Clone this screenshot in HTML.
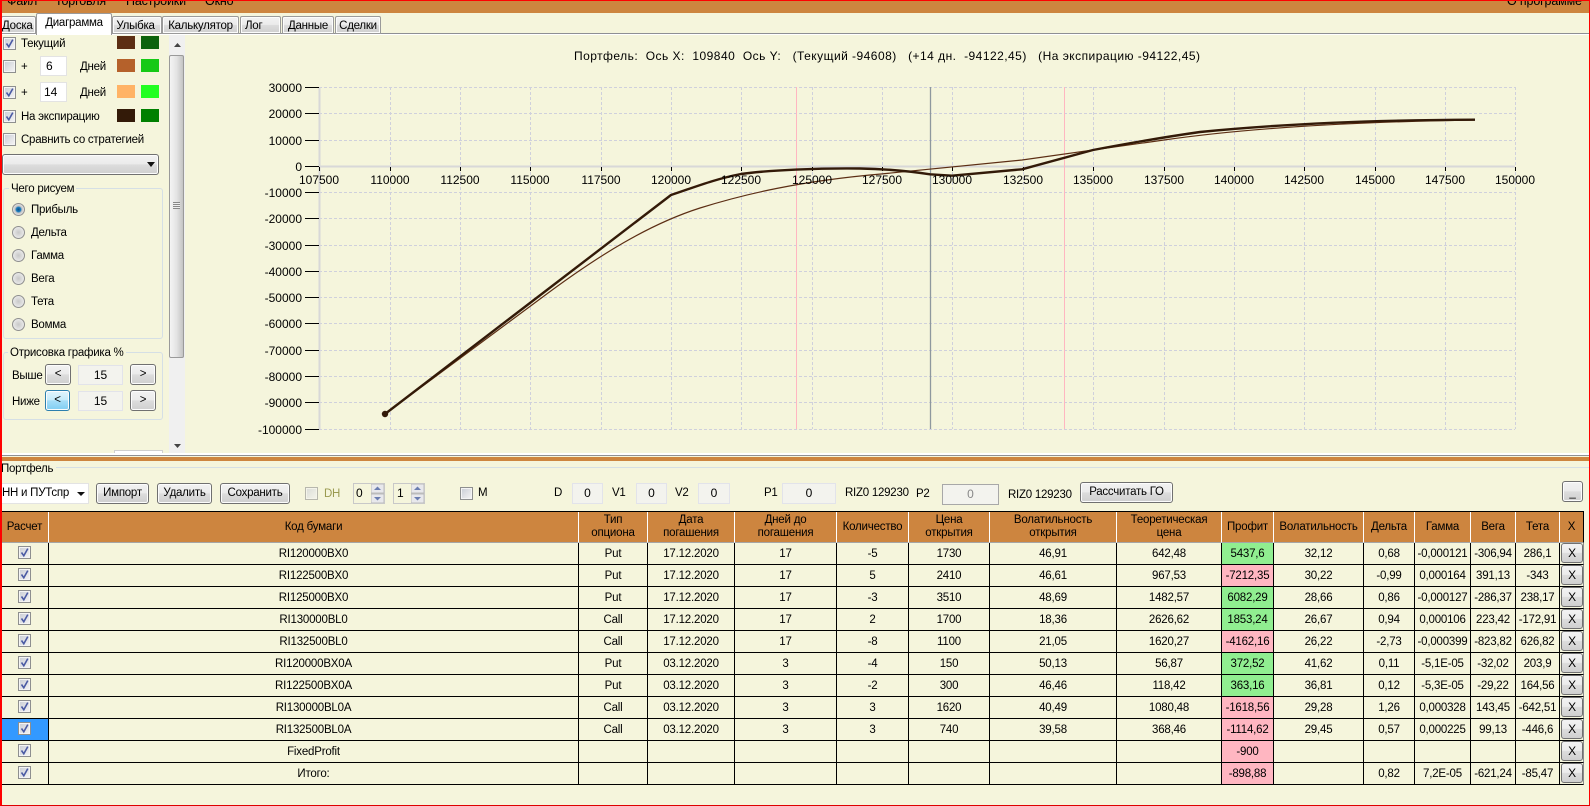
<!DOCTYPE html>
<html lang="ru"><head><meta charset="utf-8"><title>Диаграмма</title>
<style>
html,body{margin:0;padding:0;width:1590px;height:806px;overflow:hidden;background:#F5F5DC}
body{position:relative;font:11.5px/14px "Liberation Sans",Arial,sans-serif;color:#000}
.a,.t,.b,.f,.g,.s{position:absolute;box-sizing:border-box}
.t{white-space:pre;letter-spacing:-.25px}
.t[style*="left:21px"],.t[style*="left:31px"],.t[style*="left:80px"],.t[style*="left:12px"]{margin-top:1px}
.b{border:1px solid #707070;border-radius:3px;background:linear-gradient(#f2f2f2 0,#ebebeb 48%,#dddddd 50%,#cfcfcf 100%);text-align:center;box-shadow:inset 0 0 0 1px #fcfcfc;letter-spacing:-.25px;white-space:pre}
.f{background:#f3f3ee;border:1px solid #e2e3ea;text-align:center;font-size:12px}
.g{border:1px solid #d5dfe5;border-radius:3px}
.lg{position:absolute;background:#F5F5DC;padding:0 2px;letter-spacing:-.25px;white-space:pre}
.r{position:absolute;left:12px;width:13px;height:13px;border-radius:50%;border:1px solid #8f8f8f;background:radial-gradient(circle at 50% 50%,#c8c8c8,#e8e8e8 70%,#f4f4f4);box-sizing:border-box}
svg.c{position:absolute;width:13px;height:13px;display:block}
table{position:absolute;left:1px;top:511px;border-collapse:separate;border-spacing:0;table-layout:fixed;width:1583px;font-size:11.5px;line-height:13px;letter-spacing:-.2px;border-top:1px solid #000}
th{background:#CD853F;font-weight:400;height:30px;padding:0;border-right:1px solid #fff;border-bottom:1px solid #a5a5a5;box-sizing:content-box;text-align:center;vertical-align:middle}
th:last-child{border-right:1px solid #000}
td{height:20px;padding:1px 0 0;border-right:1px solid #000;border-bottom:1px solid #000;text-align:center;vertical-align:middle;white-space:nowrap;position:relative}
td:last-child{border-right:1px solid #8d8d8d}
.gr{background:#90EE90}.pk{background:#FFB6C1}.sel{background:#3399FF}
td svg.c{position:relative;display:inline-block;vertical-align:middle;top:-1px}
.x{display:block;position:absolute;left:1px;top:0;width:22px;height:20px;border:1px solid #707070;border-radius:3px;background:linear-gradient(#f2f2f2,#ebebeb 48%,#ddd 50%,#cfcfcf);box-sizing:border-box;font-size:12px;line-height:18px}
</style></head><body>
<svg width="0" height="0" style="position:absolute"><defs>
<linearGradient id="bx" x1="0" y1="0" x2="1" y2="1"><stop offset="0" stop-color="#cdd0d8"/><stop offset="1" stop-color="#f2f2f2"/></linearGradient>
<symbol id="u" viewBox="0 0 13 13"><rect x=".5" y=".5" width="12" height="12" fill="#f4f4f4" stroke="#8e8f8f"/><rect x="2" y="2" width="9" height="9" fill="url(#bx)"/></symbol>
<symbol id="k" viewBox="0 0 13 13"><rect x=".5" y=".5" width="12" height="12" fill="#f4f4f4" stroke="#8e8f8f"/><rect x="2" y="2" width="9" height="9" fill="url(#bx)"/><path d="M3.5 6.500 L5.800 9.800 L9.800 2.600" fill="none" stroke="#4a5aa4" stroke-width="1.600"/></symbol>
</defs></svg>

<!-- window frame + menu -->
<div class="a" style="left:0;top:0;width:1590px;height:13px;background:#CD853F;overflow:hidden;font-size:12.5px">
<div class="t" style="left:7px;top:-6px;letter-spacing:-.15px">Файл</div><div class="t" style="left:55px;top:-6px;letter-spacing:-.15px">Торговля</div><div class="t" style="left:126px;top:-6px;letter-spacing:-.15px">Настройки</div><div class="t" style="left:205px;top:-6px;letter-spacing:-.15px">Окно</div><div class="t" style="left:1507px;top:-6px;letter-spacing:-.15px">О программе</div>
</div>

<!-- tabs -->
<div class="a" style="left:1px;top:33px;width:1588px;height:1px;background:#8e8f94"></div>
<div class="a" style="left:1px;top:34px;width:1588px;height:1px;background:#fff"></div>
<div class="b" style="left:1px;top:16px;width:35px;height:18px;border-color:#9a9a9a;border-radius:2px 2px 0 0;line-height:19px;text-align:right;padding-right:4px;overflow:hidden">Доска</div>
<div class="b" style="left:112px;top:16px;width:50px;height:18px;border-color:#9a9a9a;border-radius:2px 2px 0 0;line-height:19px;padding-right:3px">Улыбка</div>
<div class="b" style="left:162px;top:16px;width:77px;height:18px;border-color:#9a9a9a;border-radius:2px 2px 0 0;line-height:19px">Калькулятор</div>
<div class="b" style="left:240px;top:16px;width:41px;height:18px;border-color:#9a9a9a;border-radius:2px 2px 0 0;line-height:19px;text-align:left;padding-left:4px">Лог</div>
<div class="b" style="left:282px;top:16px;width:52px;height:18px;border-color:#9a9a9a;border-radius:2px 2px 0 0;line-height:19px">Данные</div>
<div class="b" style="left:335px;top:16px;width:46px;height:18px;border-color:#9a9a9a;border-radius:2px 2px 0 0;line-height:19px">Сделки</div>
<div class="a" style="left:36px;top:13px;width:76px;height:22px;background:#fff;border:1px solid #9a9a9a;border-bottom:0;border-radius:2px 2px 0 0;text-align:center;line-height:19px;letter-spacing:-.25px">Диаграмма</div>

<!-- left panel -->
<svg class="c" style="left:3px;top:37px"><use href="#k"/></svg><div class="t" style="left:21px;top:36px">Текущий</div>
<div class="a" style="left:117px;top:36px;width:18px;height:13px;background:#5c2e14"></div><div class="a" style="left:141px;top:36px;width:18px;height:13px;background:#0c620c"></div>
<svg class="c" style="left:3px;top:60px"><use href="#u"/></svg><div class="t" style="left:21px;top:59px">+</div>
<div class="f" style="left:40px;top:56px;width:27px;height:20px;background:#fff;text-align:left;padding:2px 0 0 5px;border-color:#e3e3e3">6</div>
<div class="t" style="left:80px;top:59px">Дней</div>
<div class="a" style="left:117px;top:59px;width:18px;height:13px;background:#b5612b"></div><div class="a" style="left:141px;top:59px;width:18px;height:13px;background:#16c916"></div>
<svg class="c" style="left:3px;top:86px"><use href="#k"/></svg><div class="t" style="left:21px;top:85px">+</div>
<div class="f" style="left:40px;top:82px;width:27px;height:20px;background:#fff;text-align:left;padding:2px 0 0 3px;border-color:#e3e3e3">14</div>
<div class="t" style="left:80px;top:85px">Дней</div>
<div class="a" style="left:117px;top:85px;width:18px;height:13px;background:#ffb366"></div><div class="a" style="left:141px;top:85px;width:18px;height:13px;background:#22ff22"></div>
<svg class="c" style="left:3px;top:110px"><use href="#k"/></svg><div class="t" style="left:21px;top:109px">На экспирацию</div>
<div class="a" style="left:117px;top:109px;width:18px;height:13px;background:#331a08"></div><div class="a" style="left:141px;top:109px;width:18px;height:13px;background:#008000"></div>
<svg class="c" style="left:3px;top:133px"><use href="#u"/></svg><div class="t" style="left:21px;top:132px">Сравнить со стратегией</div>
<div class="b" style="left:2px;top:154px;width:157px;height:21px"></div>
<svg class="a" style="left:147px;top:162px" width="8" height="5"><path d="M0 0H8L4 5Z" fill="#111"/></svg>

<div class="g" style="left:3px;top:188px;width:160px;height:151px"></div>
<div class="lg" style="left:9px;top:182px">Чего рисуем</div>
<div class="r" style="top:203px;background:radial-gradient(circle,#0a4f86 0,#1c7fc0 30%,#c4c4c4 45%,#eee 80%)"></div><div class="t" style="left:31px;top:202px">Прибыль</div>
<div class="r" style="top:226px"></div><div class="t" style="left:31px;top:225px">Дельта</div>
<div class="r" style="top:249px"></div><div class="t" style="left:31px;top:248px">Гамма</div>
<div class="r" style="top:272px"></div><div class="t" style="left:31px;top:271px">Вега</div>
<div class="r" style="top:295px"></div><div class="t" style="left:31px;top:294px">Тета</div>
<div class="r" style="top:318px"></div><div class="t" style="left:31px;top:317px">Вомма</div>

<div class="g" style="left:3px;top:352px;width:160px;height:68px"></div>
<div class="lg" style="left:8px;top:346px">Отрисовка графика %</div>
<div class="t" style="left:12px;top:368px">Выше</div>
<div class="b" style="left:45px;top:364px;width:26px;height:21px;line-height:19px">&lt;</div>
<div class="f" style="left:78px;top:365px;width:45px;height:20px;line-height:18px">15</div>
<div class="b" style="left:130px;top:364px;width:26px;height:21px;line-height:19px">&gt;</div>
<div class="t" style="left:12px;top:394px">Ниже</div>
<div class="b" style="left:45px;top:390px;width:25px;height:21px;line-height:19px;border-color:#2c7fae;background:linear-gradient(#e3f5fd,#c6ebfb 48%,#a6def8 50%,#7fcdf2)">&lt;</div>
<div class="f" style="left:78px;top:391px;width:45px;height:20px;line-height:18px">15</div>
<div class="b" style="left:130px;top:390px;width:26px;height:21px;line-height:19px">&gt;</div>
<div class="a" style="left:114px;top:450px;width:49px;height:3px;background:#fff;border:1px solid #cfcfcf;border-bottom:0"></div>

<!-- scrollbar -->
<div class="a" style="left:169px;top:35px;width:16px;height:418px;background:#f0f0f0"></div>
<svg class="a" style="left:174px;top:43px" width="7" height="4"><path d="M3.500 0L7 4H0Z" fill="#444"/></svg>
<div class="a" style="left:169px;top:55px;width:15px;height:303px;border:1px solid #9a9a9a;border-radius:2px;background:linear-gradient(90deg,#f4f4f4,#e4e4e4 50%,#c4c4c4)"></div>
<div class="a" style="left:173px;top:202px;width:7px;height:7px;background:repeating-linear-gradient(#888 0,#888 1px,#eee 1px,#eee 2px)"></div>
<svg class="a" style="left:174px;top:444px" width="7" height="4"><path d="M0 0H7L3.500 4Z" fill="#444"/></svg>

<!-- chart -->
<svg class="a" style="left:0;top:0" width="1590" height="450" font-family="'Liberation Sans',Arial,sans-serif" font-size="12">
<text x="574" y="60" xml:space="preserve" textLength="626">Портфель:  Ось X:  109840  Ось Y:   (Текущий -94608)   (+14 дн.  -94122,45)   (На экспирацию -94122,45)</text>
<g stroke="#cfd0dc" stroke-dasharray="3 2" fill="none">
<path d="M319 87.500H1515M319 113.500H1515M319 140.500H1515M319 192.500H1515M319 218.500H1515M319 245.500H1515M319 271.500H1515M319 297.500H1515M319 323.500H1515M319 350.500H1515M319 376.500H1515M319 402.500H1515M319 429.500H1515"/>
<path d="M390.500 87V429M460.500 87V429M530.500 87V429M601.500 87V429M671.500 87V429M741.500 87V429M812.500 87V429M882.500 87V429M952.500 87V429M1023.500 87V429M1093.500 87V429M1164.500 87V429M1234.500 87V429M1304.500 87V429M1375.500 87V429M1445.500 87V429M1515.500 87V429"/>
</g>
<path d="M319.500 87V429" stroke="#d8d8d8" stroke-width="2"/>
<path d="M319 166.500H1515" stroke="#d8d8d8" stroke-width="2"/>
<path d="M305 87.500H319M305 113.500H319M305 140.500H319M305 166.500H319M305 192.500H319M305 218.500H319M305 245.500H319M305 271.500H319M305 297.500H319M305 323.500H319M305 350.500H319M305 376.500H319M305 402.500H319M305 429.500H319" stroke="#000"/>
<path d="M319.500 167V171M390.500 167V171M460.500 167V171M530.500 167V171M601.500 167V171M671.500 167V171M741.500 167V171M812.500 167V171M882.500 167V171M952.500 167V171M1023.500 167V171M1093.500 167V171M1164.500 167V171M1234.500 167V171M1304.500 167V171M1375.500 167V171M1445.500 167V171M1515.500 167V171" stroke="#000"/>
<path d="M796.500 87V429" stroke="#ffb6c1"/><path d="M1064.500 87V429" stroke="#ffb6c1"/><path d="M930.500 87V429" stroke="#8e989e" stroke-width="1.300"/>
<path fill="none" stroke="#5c2e14" stroke-width="1.200" d="M385 414L540 299C600 254 650 224 700 208C745 194 800 181 881 174L1022 160C1060 155 1110 148 1164 140C1240 129 1340 122 1475 120"/>
<path fill="none" stroke="#331a08" stroke-width="2.400" stroke-linejoin="round" d="M385 414L671 195C695 187 715 179 741 174C770 170 820 168 860 168.500C890 169 915 172 930 174.300L952 175.700L1022 169.300L1093 150C1130 143 1165 137 1200 132C1280 124 1380 120 1475 119.700"/>
<circle cx="385" cy="414" r="3.200" fill="#331a08"/>
<g text-anchor="end">
<text x="302" y="92">30000</text><text x="302" y="118">20000</text><text x="302" y="145">10000</text><text x="302" y="171">0</text><text x="302" y="197">-10000</text><text x="302" y="223">-20000</text><text x="302" y="250">-30000</text><text x="302" y="276">-40000</text><text x="302" y="302">-50000</text><text x="302" y="328">-60000</text><text x="302" y="355">-70000</text><text x="302" y="381">-80000</text><text x="302" y="407">-90000</text><text x="302" y="434">-100000</text>
</g>
<g text-anchor="middle">
<text x="319" y="184">107500</text><text x="390" y="184">110000</text><text x="460" y="184">112500</text><text x="530" y="184">115000</text><text x="601" y="184">117500</text><text x="671" y="184">120000</text><text x="741" y="184">122500</text><text x="812" y="184">125000</text><text x="882" y="184">127500</text><text x="952" y="184">130000</text><text x="1023" y="184">132500</text><text x="1093" y="184">135000</text><text x="1164" y="184">137500</text><text x="1234" y="184">140000</text><text x="1304" y="184">142500</text><text x="1375" y="184">145000</text><text x="1445" y="184">147500</text><text x="1515" y="184">150000</text>
</g>
</svg>

<!-- splitter -->
<div class="a" style="left:1px;top:453px;width:1588px;height:2px;background:#fff"></div>
<div class="a" style="left:1px;top:455px;width:1588px;height:1px;background:#8e8f94"></div>
<div class="a" style="left:1px;top:457px;width:1588px;height:4px;background:#CD853F"></div>
<div class="a" style="left:1px;top:467px;width:1588px;height:1px;background:#d5dfe5"></div>
<div class="lg" style="left:1px;top:462px;padding:0 3px 0 0">Портфель</div>

<!-- toolbar -->
<div class="f" style="left:0;top:483px;width:89px;height:21px;background:#fff;text-align:left;line-height:19px;letter-spacing:-.25px;white-space:pre;border-color:#e3e3e3;font-size:11.5px;padding-left:1px">НН и ПУТспр</div>
<svg class="a" style="left:77px;top:492px" width="8" height="4"><path d="M0 0H8L4 4Z" fill="#111"/></svg>
<div class="b" style="left:96px;top:483px;width:53px;height:21px;line-height:19px">Импорт</div>
<div class="b" style="left:157px;top:483px;width:55px;height:21px;line-height:19px">Удалить</div>
<div class="b" style="left:220px;top:483px;width:70px;height:21px;line-height:19px">Сохранить</div>
<svg class="c" style="left:305px;top:487px;opacity:.6"><use href="#u"/></svg><div class="t" style="left:324px;top:487px;color:#9a9a50">DH</div>
<div class="f" style="left:353px;top:483px;width:32px;height:21px;background:#f5f5dc;border-color:#c8c8c8;text-align:left;padding:2px 0 0 2px">0</div>
<svg class="a" style="left:371px;top:484px" width="13" height="19"><rect width="13" height="9" fill="#e8e8ec" stroke="#bbb"/><rect y="10" width="13" height="9" fill="#e8e8ec" stroke="#bbb"/><path d="M3 6L6.500 2.500L10 6Z" fill="#6a7db0"/><path d="M3 13L6.500 16.500L10 13Z" fill="#6a7db0"/></svg>
<div class="f" style="left:393px;top:483px;width:32px;height:21px;background:#f5f5dc;border-color:#c8c8c8;text-align:left;padding:2px 0 0 3px">1</div>
<svg class="a" style="left:411px;top:484px" width="13" height="19"><rect width="13" height="9" fill="#e8e8ec" stroke="#bbb"/><rect y="10" width="13" height="9" fill="#e8e8ec" stroke="#bbb"/><path d="M3 6L6.500 2.500L10 6Z" fill="#6a7db0"/><path d="M3 13L6.500 16.500L10 13Z" fill="#6a7db0"/></svg>
<svg class="c" style="left:460px;top:487px"><use href="#u"/></svg><div class="t" style="left:478px;top:486px">M</div>
<div class="t" style="left:554px;top:486px">D</div><div class="f" style="left:572px;top:483px;width:31px;height:21px;line-height:19px">0</div>
<div class="t" style="left:612px;top:486px">V1</div><div class="f" style="left:636px;top:483px;width:31px;height:21px;line-height:19px">0</div>
<div class="t" style="left:675px;top:486px">V2</div><div class="f" style="left:698px;top:483px;width:32px;height:21px;line-height:19px">0</div>
<div class="t" style="left:764px;top:486px">P1</div><div class="f" style="left:782px;top:483px;width:54px;height:21px;line-height:19px">0</div>
<div class="t" style="left:845px;top:486px">RIZ0 129230</div><div class="t" style="left:916px;top:487px">P2</div>
<div class="f" style="left:942px;top:484px;width:57px;height:21px;line-height:19px;border-color:#a8a8a8;color:#888">0</div>
<div class="t" style="left:1008px;top:488px">RIZ0 129230</div>
<div class="b" style="left:1080px;top:482px;width:93px;height:21px;line-height:19px">Рассчитать ГО</div>
<div class="b" style="left:1562px;top:481px;width:21px;height:21px;line-height:22px">_</div>

<!-- table -->
<table><colgroup><col style="width:48px"><col style="width:530px"><col style="width:69px"><col style="width:87px"><col style="width:102px"><col style="width:72px"><col style="width:81px"><col style="width:127px"><col style="width:105px"><col style="width:52px"><col style="width:90px"><col style="width:51px"><col style="width:56px"><col style="width:45px"><col style="width:44px"><col style="width:24px"></colgroup>
<tr><th>Расчет</th><th>Код бумаги</th><th>Тип<br>опциона</th><th>Дата<br>погашения</th><th>Дней до<br>погашения</th><th>Количество</th><th>Цена<br>открытия</th><th>Волатильность<br>открытия</th><th>Теоретическая<br>цена</th><th>Профит</th><th>Волатильность</th><th>Дельта</th><th>Гамма</th><th>Вега</th><th>Тета</th><th>X</th></tr>
<tr><td><svg class="c"><use href="#k"/></svg></td><td>RI120000BX0</td><td>Put</td><td>17.12.2020</td><td>17</td><td>-5</td><td>1730</td><td>46,91</td><td>642,48</td><td class="gr">5437,6</td><td>32,12</td><td>0,68</td><td>-0,000121</td><td>-306,94</td><td>286,1</td><td><span class="x">X</span></td></tr>
<tr><td><svg class="c"><use href="#k"/></svg></td><td>RI122500BX0</td><td>Put</td><td>17.12.2020</td><td>17</td><td>5</td><td>2410</td><td>46,61</td><td>967,53</td><td class="pk">-7212,35</td><td>30,22</td><td>-0,99</td><td>0,000164</td><td>391,13</td><td>-343</td><td><span class="x">X</span></td></tr>
<tr><td><svg class="c"><use href="#k"/></svg></td><td>RI125000BX0</td><td>Put</td><td>17.12.2020</td><td>17</td><td>-3</td><td>3510</td><td>48,69</td><td>1482,57</td><td class="gr">6082,29</td><td>28,66</td><td>0,86</td><td>-0,000127</td><td>-286,37</td><td>238,17</td><td><span class="x">X</span></td></tr>
<tr><td><svg class="c"><use href="#k"/></svg></td><td>RI130000BL0</td><td>Call</td><td>17.12.2020</td><td>17</td><td>2</td><td>1700</td><td>18,36</td><td>2626,62</td><td class="gr">1853,24</td><td>26,67</td><td>0,94</td><td>0,000106</td><td>223,42</td><td>-172,91</td><td><span class="x">X</span></td></tr>
<tr><td><svg class="c"><use href="#k"/></svg></td><td>RI132500BL0</td><td>Call</td><td>17.12.2020</td><td>17</td><td>-8</td><td>1100</td><td>21,05</td><td>1620,27</td><td class="pk">-4162,16</td><td>26,22</td><td>-2,73</td><td>-0,000399</td><td>-823,82</td><td>626,82</td><td><span class="x">X</span></td></tr>
<tr><td><svg class="c"><use href="#k"/></svg></td><td>RI120000BX0A</td><td>Put</td><td>03.12.2020</td><td>3</td><td>-4</td><td>150</td><td>50,13</td><td>56,87</td><td class="gr">372,52</td><td>41,62</td><td>0,11</td><td>-5,1E-05</td><td>-32,02</td><td>203,9</td><td><span class="x">X</span></td></tr>
<tr><td><svg class="c"><use href="#k"/></svg></td><td>RI122500BX0A</td><td>Put</td><td>03.12.2020</td><td>3</td><td>-2</td><td>300</td><td>46,46</td><td>118,42</td><td class="gr">363,16</td><td>36,81</td><td>0,12</td><td>-5,3E-05</td><td>-29,22</td><td>164,56</td><td><span class="x">X</span></td></tr>
<tr><td><svg class="c"><use href="#k"/></svg></td><td>RI130000BL0A</td><td>Call</td><td>03.12.2020</td><td>3</td><td>3</td><td>1620</td><td>40,49</td><td>1080,48</td><td class="pk">-1618,56</td><td>29,28</td><td>1,26</td><td>0,000328</td><td>143,45</td><td>-642,51</td><td><span class="x">X</span></td></tr>
<tr><td class="sel"><svg class="c"><use href="#k"/></svg></td><td>RI132500BL0A</td><td>Call</td><td>03.12.2020</td><td>3</td><td>3</td><td>740</td><td>39,58</td><td>368,46</td><td class="pk">-1114,62</td><td>29,45</td><td>0,57</td><td>0,000225</td><td>99,13</td><td>-446,6</td><td><span class="x">X</span></td></tr>
<tr><td><svg class="c"><use href="#k"/></svg></td><td>FixedProfit</td><td></td><td></td><td></td><td></td><td></td><td></td><td></td><td class="pk">-900</td><td></td><td></td><td></td><td></td><td></td><td><span class="x">X</span></td></tr>
<tr><td><svg class="c"><use href="#k"/></svg></td><td>Итого:</td><td></td><td></td><td></td><td></td><td></td><td></td><td></td><td class="pk">-898,88</td><td></td><td>0,82</td><td>7,2E-05</td><td>-621,24</td><td>-85,47</td><td><span class="x">X</span></td></tr>
</table>

<!-- red frame -->
<div class="a" style="left:0;top:0;width:1590px;height:806px;border:1px solid #f00;border-left-width:2px;border-bottom-color:#d00;pointer-events:none"></div>
</body></html>
